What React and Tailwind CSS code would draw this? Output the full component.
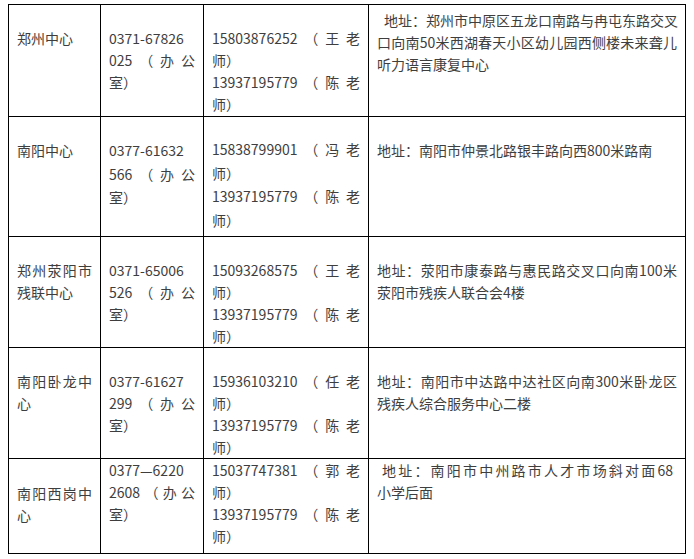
const J = "text-justify [text-align-last:justify]";

const rows = [
  {
    h: "h-[112px]",
    cells: [
      { pt: "pt-[22px]", lines: [["郑州中心", false]] },
      { pt: "pt-[22px]", lines: [["0371-67826", false], ["025（办公", true], ["室）", false]] },
      { pt: "pt-[22px]", lines: [["15803876252（王老", true], ["师）", false], ["13937195779（陈老", true], ["师）", false]] },
      { pt: "pt-[4px]", indent: "pl-[7px]", lines: [["地址：郑州市中原区五龙口南路与冉屯东路交叉", true], ["口向南50米西湖春天小区幼儿园西侧楼未来聋儿", true], ["听力语言康复中心", false]] },
    ],
  },
  {
    h: "h-[120px]",
    lead: "leading-[23.5px]",
    cells: [
      { pt: "pt-[22px]", lines: [["南阳中心", false]] },
      { pt: "pt-[22px]", lines: [["0377-61632", false], ["566（办公", true], ["室）", false]] },
      { pt: "pt-[21px]", lines: [["15838799901（冯老", true], ["师）", false], ["13937195779（陈老", true], ["师）", false]] },
      { pt: "pt-[22px]", lines: [["地址：南阳市仲景北路银丰路向西800米路南", false]] },
    ],
  },
  {
    h: "h-[111px]",
    cells: [
      { pt: "pt-[22px]", lines: [["郑州荥阳市", true], ["残联中心", false]] },
      { pt: "pt-[22px]", lines: [["0371-65006", false], ["526（办公", true], ["室）", false]] },
      { pt: "pt-[22px]", lines: [["15093268575（王老", true], ["师）", false], ["13937195779（陈老", true], ["师）", false]] },
      { pt: "pt-[22px]", lines: [["地址：荥阳市康泰路与惠民路交叉口向南100米", true], ["荥阳市残疾人联合会4楼", false]] },
    ],
  },
  {
    h: "h-[111px]",
    cells: [
      { pt: "pt-[22px]", lines: [["南阳卧龙中", true], ["心", false]] },
      { pt: "pt-[22px]", lines: [["0377-61627", false], ["299（办公", true], ["室）", false]] },
      { pt: "pt-[22px]", lines: [["15936103210（任老", true], ["师）", false], ["13937195779（陈老", true], ["师）", false]] },
      { pt: "pt-[22px]", lines: [["地址：南阳市中达路中达社区向南300米卧龙区", true], ["残疾人综合服务中心二楼", false]] },
    ],
  },
  {
    h: "h-[95px]",
    cells: [
      { pt: "pt-[23px]", lines: [["南阳西岗中", true], ["心", false]] },
      { pt: "pt-[0px]", lines: [["0377—6220", false], ["2608（办公", true], ["室）", false]] },
      { pt: "pt-[0px]", lines: [["15037747381（郭老", true], ["师）", false], ["13937195779（陈老", true], ["师）", false]] },
      { pt: "pt-[0px]", indent: "pl-[5px] pr-[4px]", lines: [["地址：南阳市中州路市人才市场斜对面68", true], ["小学后面", false]] },
    ],
  },
];

const widths = ["w-[92px]", "w-[103px]", "w-[165px]", "w-[317px]"];

export default function App() {
  return (
    <div className="w-[694px] h-[559px] bg-white pl-[8px] pt-[4px] text-[14px] text-[#3e3e3e] font-['Noto_Sans_CJK_SC','Noto_Sans',sans-serif]">
      <table className="border-collapse table-fixed w-[678px]">
        <colgroup>
          {widths.map((w, i) => (
            <col key={i} className={w} />
          ))}
        </colgroup>
        <tbody>
          {rows.map((row, r) => (
            <tr key={r} className={row.h}>
              {row.cells.map((cell, c) => (
                <td
                  key={c}
                  className={`border border-black align-top px-2 pb-0 ${cell.pt} ${row.lead || "leading-[22px]"}`}
                >
                  {cell.lines.map(([text, just], k) => (
                    <div
                      key={k}
                      className={`whitespace-nowrap ${just ? J : ""} ${k === 0 && cell.indent ? cell.indent : ""}`}
                    >
                      {text}
                    </div>
                  ))}
                </td>
              ))}
            </tr>
          ))}
        </tbody>
      </table>
    </div>
  );
}
